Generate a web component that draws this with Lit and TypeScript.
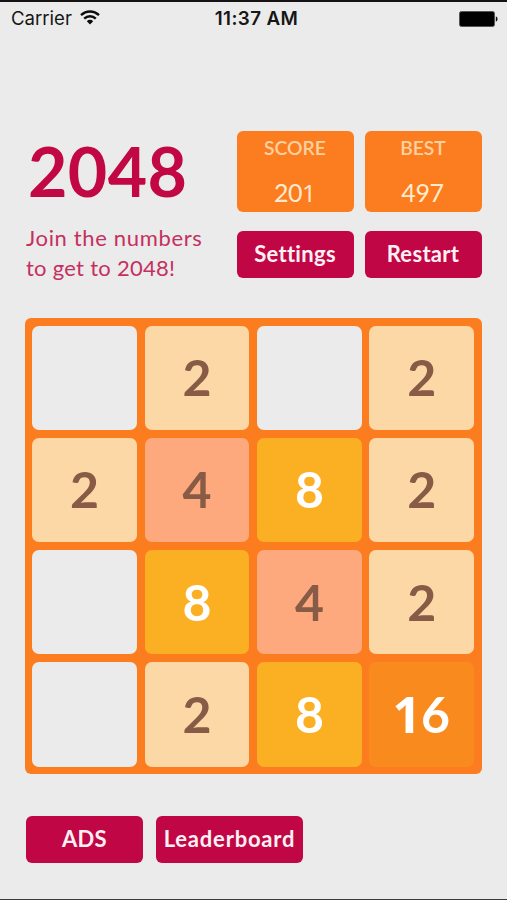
import { LitElement, html, css } from "lit";
import { customElement, property } from "lit/decorators.js";

const digits = (value: number) =>
  [...String(value)].map((d) => html`<span class=${d === "1" ? "one" : "digit"}>${d}</span>`);

@customElement("status-bar")
class StatusBar extends LitElement {
  static styles = css`
    :host {
      display: grid;
      grid-template-columns: 1fr auto 1fr;
      align-items: center;
      height: 33px;
      padding: 0 9px 0 11px;
      font: 400 18.6px/33px Inter, sans-serif;
      color: #161616;
    }
    .carrier { display: flex; align-items: center; gap: 8px; }
    .time { font-size: 18.8px; font-weight: 600; letter-spacing: 0.4px; padding-left: 4px; }
    .battery { justify-self: end; }
    svg { display: block; }
    .wifi { margin-top: -3px; }
  `;
  render() {
    return html`
      <div class="carrier">
        <span>Carrier</span>
        <svg class="wifi" width="20" height="15" viewBox="0 0 20 15">
          <g fill="none" stroke="#0c0c0c" stroke-width="2.4">
            <path d="M1 5.2C6.2 .2 13.8 .2 19 5.2" />
            <path d="M4.2 8.7C7.6 5.4 12.4 5.4 15.8 8.7" />
          </g>
          <path d="M6.8 11.2C8.6 9.4 11.4 9.4 13.2 11.2L10 14.4Z" fill="#0c0c0c" />
        </svg>
      </div>
      <div class="time">11:37 AM</div>
      <svg class="battery" width="39" height="16" viewBox="0 0 39 16">
        <rect x="0.5" y="0.5" width="35" height="15" rx="2" fill="#000" stroke="#555" />
        <path d="M36.8 5.2Q38.6 6 38.6 8T36.8 10.8Z" fill="#111" />
      </svg>
    `;
  }
}

@customElement("score-box")
class ScoreBox extends LitElement {
  @property() label = "";
  @property({ type: Number }) value = 0;
  static styles = css`
    :host {
      display: flex;
      flex-direction: column;
      justify-content: space-between;
      align-items: center;
      box-sizing: border-box;
      height: 81px;
      padding: 4px 0 5px;
      border-radius: 6px;
      background: #fc7d1f;
      font-family: Lato, sans-serif;
    }
    .label { font-size: 19.3px; line-height: 25px; font-weight: 600; color: #fed1a0; }
    .value { font-size: 25px; line-height: 30px; color: #ffebcd; letter-spacing: -0.4px; padding-right: 1px; }
    .one { font-family: "Open Sans", sans-serif; font-size: 24.5px; line-height: 1; letter-spacing: -1px; }
  `;
  render() {
    return html`<span class="label">${this.label}</span><span class="value">${digits(this.value)}</span>`;
  }
}

@customElement("game-tile")
class GameTile extends LitElement {
  @property({ type: Number, reflect: true }) value = 0;
  static styles = css`
    :host {
      display: flex;
      align-items: center;
      justify-content: center;
      box-sizing: border-box;
      padding-bottom: 1px;
      border-radius: 7px;
      background: #ebebeb;
      font: 700 50px/60px Lato, sans-serif;
      color: #fff;
    }
    :host([value="2"]) { background: #fdd8a7; color: #875b46; }
    :host([value="4"]) { background: #fda97d; color: #875b46; }
    :host([value="8"]) { background: #fbaf23; }
    :host([value="16"]) { background: #f98b1e; }
    .one { font-family: "Open Sans", sans-serif; line-height: 1; margin-left: -1px; }
  `;
  render() {
    return this.value ? html`<div>${digits(this.value)}</div>` : html``;
  }
}

@customElement("app-root")
class AppRoot extends LitElement {
  private cells = [0, 2, 0, 2, 2, 4, 8, 2, 0, 8, 4, 2, 0, 2, 8, 16];

  static styles = css`
    :host {
      display: flex;
      flex-direction: column;
      box-sizing: border-box;
      width: 507px;
      height: 900px;
      border-top: 2px solid #171314;
      border-bottom: 1px solid #3b3b3b;
      background: #ebebeb;
      font-family: Lato, sans-serif;
      overflow: hidden;
    }
    .header {
      display: grid;
      grid-template-columns: 1fr 245px;
      margin: 96px 25.5px 0 26px;
      height: 147px;
    }
    h1 {
      margin: 0;
      padding: 0 0 0 2px;
      font-size: 68px;
      line-height: 80px;
      font-weight: 700;
      letter-spacing: 0.4px;
      color: #c10844;
    }
    p {
      margin: 12px 0 0;
      font-size: 22px;
      line-height: 30px;
      color: #c5305f;
      white-space: nowrap;
    }
    .first { letter-spacing: 0.65px; }
    .second { letter-spacing: 0.27px; }
    .panel {
      display: grid;
      grid-template-columns: 117px 117px;
      grid-template-rows: 81px 47px;
      gap: 19px 11px;
    }
    button {
      height: 47px;
      padding: 0 0 1px;
      border: 0;
      border-radius: 6px;
      background: #c00644;
      color: #fff0f4;
      font: 700 22px/46px Lato, sans-serif;
      letter-spacing: 0.3px;
    }
    .board {
      display: grid;
      box-sizing: border-box;
      grid-template: repeat(4, 1fr) / repeat(4, 1fr);
      gap: 7.7px;
      width: 457px;
      height: 456px;
      margin: 40px 0 0 24.7px;
      padding: 7.5px;
      border-radius: 6px;
      background: #fc7d1f;
    }
    .footer { display: flex; gap: 13px; margin: 42px 0 0 26px; }
    .ads { width: 117px; }
    .leaderboard { width: 147px; letter-spacing: 0.8px; }
  `;

  render() {
    return html`
      <status-bar></status-bar>
      <div class="header">
        <div>
          <h1>2048</h1>
          <p><span class="first">Join the numbers</span><br /><span class="second">to get to 2048!</span></p>
        </div>
        <div class="panel">
          <score-box label="SCORE" value="201"></score-box>
          <score-box label="BEST" value="497"></score-box>
          <button>Settings</button>
          <button>Restart</button>
        </div>
      </div>
      <div class="board">
        ${this.cells.map((value) => html`<game-tile .value=${value}></game-tile>`)}
      </div>
      <div class="footer">
        <button class="ads">ADS</button>
        <button class="leaderboard">Leaderboard</button>
      </div>
    `;
  }
}
